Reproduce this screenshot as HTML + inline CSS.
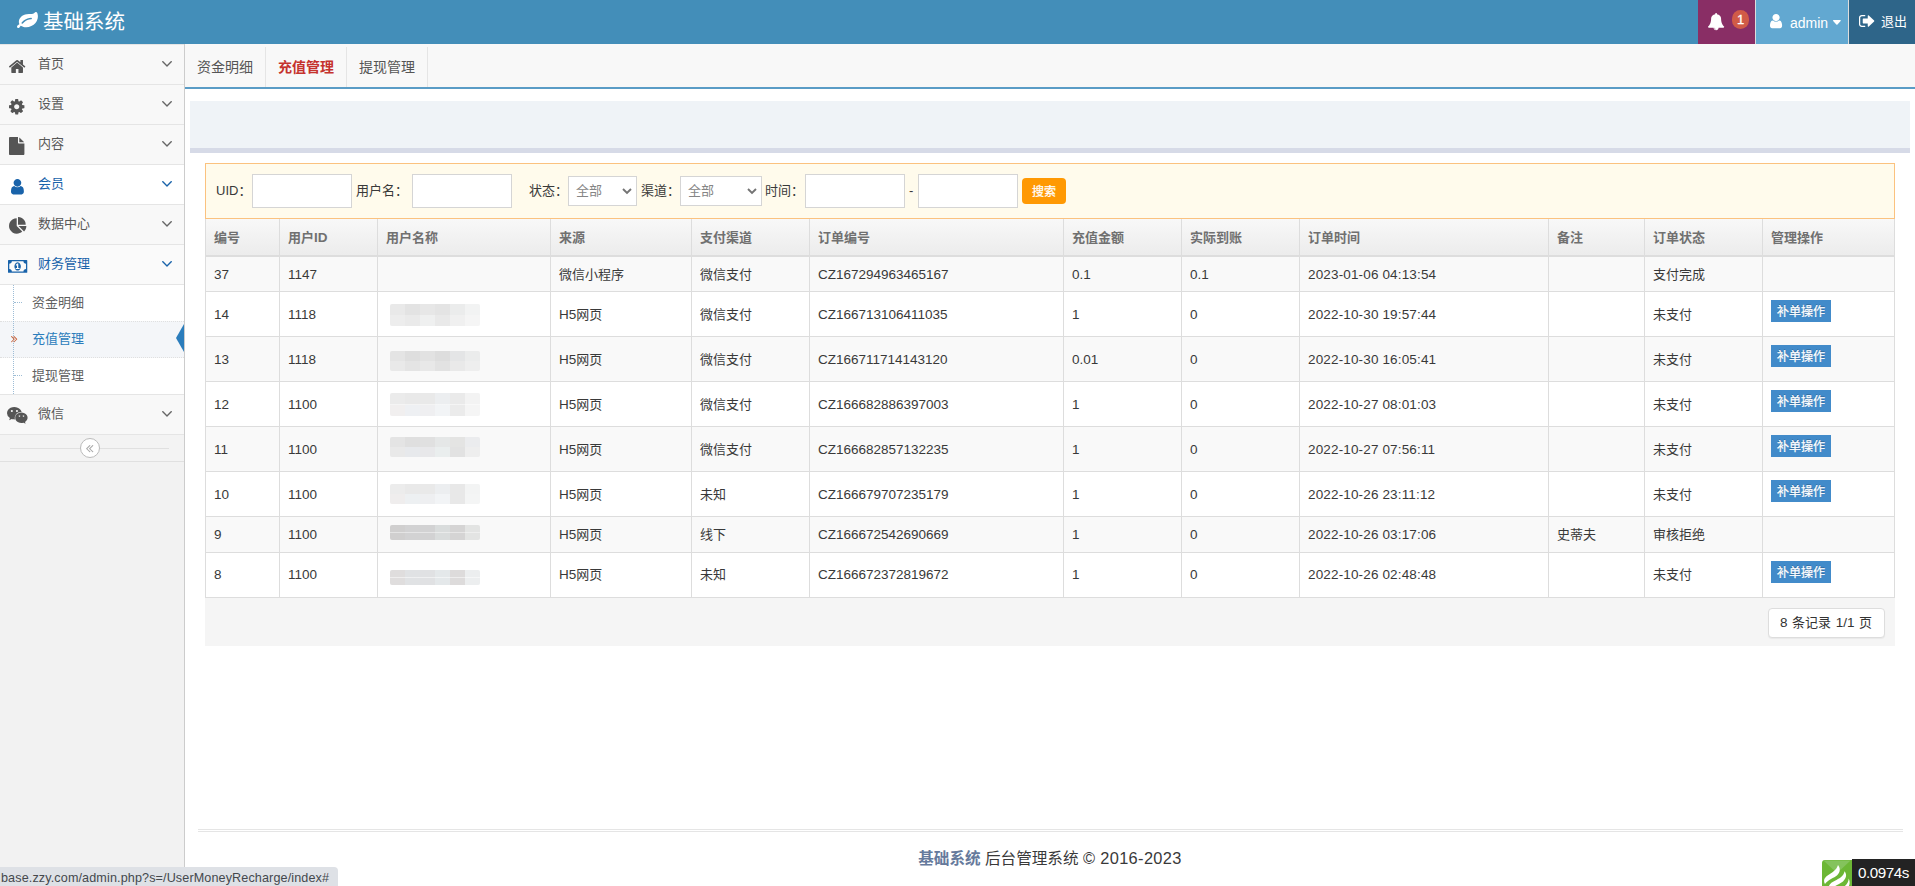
<!DOCTYPE html>
<html lang="zh-CN">
<head>
<meta charset="utf-8">
<title>基础系统</title>
<style>
*{box-sizing:border-box}
html,body{margin:0;padding:0}
body{width:1915px;height:886px;overflow:hidden;background:#fff;position:relative;
 font-family:"Liberation Sans","Noto Sans CJK SC",sans-serif;font-size:13px;color:#393939;line-height:1.5}
svg{display:block}
/* navbar */
#navbar{position:absolute;left:0;top:0;width:1915px;height:44px;background:#438eb9}
#brand{position:absolute;left:43px;top:1px;height:44px;line-height:42px;color:#fff;font-size:20.5px;white-space:nowrap}
.acenav{position:absolute;top:0;height:44px;color:#fff;font-size:13px;line-height:43px;white-space:nowrap}
#nv-bell{left:1698px;width:57px;background:#892e65}
#nv-user{left:1756px;width:92px;background:#62a8d1}
#nv-out{left:1849px;width:66px;background:#2e6589}
#navbar .sep{position:absolute;top:0;width:1px;height:44px;background:#ddd}
.badge{position:absolute;left:34px;top:10px;width:17px;height:19px;border-radius:9px;background:#d15b47;color:#fff;font-size:13px;line-height:19.5px;text-align:center;-webkit-text-stroke:.3px #fff}
svg.i{position:absolute;overflow:visible}
#icons{position:absolute;left:0;top:0;width:0;height:0}
/* sidebar */
#sidebar{position:absolute;left:0;top:44px;width:185px;height:842px;background:#f2f2f2;border-right:1px solid #ccc}
.item{position:absolute;left:0;width:184px;height:41px;background:#f8f8f8;border-bottom:1px solid #e5e5e5;border-top:1px solid #e5e5e5;color:#585858;font-size:13px;line-height:38px}
.item .txt{position:absolute;left:38px;top:0}
.item.hover{background:#fff;color:#1963aa}
.item.open{background:#fafafa;color:#1963aa}
#submenu{position:absolute;left:0;top:241px;width:184px;height:109px;background:#fff}
#vline{position:absolute;left:13px;top:0;width:0;height:109px;border-left:1px dotted #9dbdd6}
.tick{position:absolute;left:14px;width:8px;height:0;border-top:1px dotted #9dbdd6}
.sub{position:absolute;left:0;width:184px;height:37px;line-height:35px;color:#616161;font-size:13px}
.sub .txt{position:absolute;left:32px;top:0}
.sub.active{background:#f4f6f9;color:#2b7dbc;border-top:1px dotted #e0e0e0;border-bottom:1px dotted #e0e0e0;line-height:34px}
.tri{position:absolute;left:176px;top:2px;width:0;height:0;border-top:14px solid transparent;border-bottom:14px solid transparent;border-right:8px solid #2b7dbc}
#collapse{position:absolute;left:0;top:391px;width:184px;height:27px;background:#f3f3f3;border-bottom:1px solid #e0e0e0}
#collapse .ln{position:absolute;left:10px;top:13px;width:159px;height:1px;background:#e0e0e0}
#collapse .circ{position:absolute;left:80.2px;top:3px;width:19.5px;height:19.5px;border-radius:10px;border:1px solid #bbb;background:#fff}
/* tabs */
#tabs{position:absolute;left:185px;top:44px;width:1730px;height:45px;background:#f8f8f8;border-bottom:2px solid #5a9cc6}
.tab{position:absolute;top:3px;height:40px;width:81px;border-right:1px solid #e5e5e5;line-height:40px;text-align:center;font-size:14px;color:#555}
.tab.on{color:#c5332e;font-weight:bold}
/* header box */
#hdr{position:absolute;left:190px;top:101px;width:1720px;height:52px;background:#eff3f7;border-bottom:5px solid #d6dae7}
/* search */
#search{position:absolute;left:205px;top:163px;width:1690px;height:56px;background:#fffbec;border:1px solid #fbc27f;font-size:13px;color:#393939}
#search .lb{position:absolute;top:0;line-height:54px;white-space:nowrap}
#search .inp{position:absolute;top:10px;height:34px;width:100px;background:#fff;border:1px solid #d5d5d5}
#search .sel{position:absolute;top:12px;height:30px;background:#fff;border:1px solid #d5d5d5;border-radius:0;color:#858585;line-height:28px;padding-left:7px}
.chev{position:absolute;right:4px;top:11px;width:10px;height:7px}
#sbtn{position:absolute;left:816px;top:14px;width:44px;height:26px;border-radius:4px;background:#ff9903;color:#fff;font-size:12px;line-height:28.5px;text-align:center;overflow:hidden;-webkit-text-stroke:.25px #fff}
/* table */
#tbl{position:absolute;left:205px;top:219px;width:1690px;border-collapse:separate;border-spacing:0;table-layout:fixed;font-size:13px;color:#393939}
#tbl th,#tbl td{border-right:1px solid #ddd;border-bottom:1px solid #ddd;padding:0 0 0 8px;text-align:left;white-space:nowrap;overflow:hidden;vertical-align:middle;line-height:19px}
#tbl th:first-child,#tbl td:first-child{border-left:1px solid #ddd}
#tbl th{height:38px;color:#707070;font-weight:bold;background:linear-gradient(#f8f8f8,#ececec);border-bottom:2px solid #ddd}
#tbl tr.a td{background:#f9f9f9}
#tbl tr.b td{background:#fff}
#tbl tr.h35 td{height:35px}
#tbl tr.h36 td{height:36px}
#tbl tr.h45 td{height:45px}
#tbl tr.last td{padding-bottom:2px}
.n{font-size:13.5px;letter-spacing:0}
.d{font-size:13.5px;letter-spacing:.15px}
.op{display:inline-block;background:#428bca;color:#fff;font-size:12px;height:22px;line-height:24px;padding:0 6px;position:relative;top:-3px;vertical-align:middle;-webkit-text-stroke:.25px #fff;text-shadow:0 -1px 0 rgba(0,0,0,.25);overflow:hidden}
#tbl tr.last .op{top:-2px}
.bl{position:absolute;left:390px;width:90px;border-radius:2px}
#pager{position:absolute;left:205px;top:598px;width:1690px;height:48px;background:#f5f5f5}
#pager div{position:absolute;left:1562.5px;top:10px;width:117px;height:29.5px;background:#fff;border:1px solid #ddd;border-radius:4px;box-shadow:0 1px 1px rgba(0,0,0,.05);line-height:28px;text-align:center;font-size:13px;color:#333;word-spacing:1px;white-space:nowrap}
/* footer */
#foot{position:absolute;left:198px;top:829px;width:1705px;height:3px;border-top:3px double #e5e5e5}
#foottxt{position:absolute;left:185px;top:846px;width:1730px;text-align:center;font-size:15.6px;color:#393939;line-height:24px;white-space:nowrap}
#foottxt b{color:#667a9c}
#status{position:absolute;left:0;top:867px;width:338px;height:19px;background:#dee1e6;border-top-right-radius:4px;font-size:12.6px;letter-spacing:.12px;line-height:22.5px;color:#44484d;white-space:nowrap;padding-left:1px;overflow:hidden}
#trace{position:absolute;left:1852px;top:859px;width:63px;height:27px;background:#232323;color:#fff;font-size:15.2px;letter-spacing:-.45px;line-height:28px;text-align:center}
#tplogo{position:absolute;left:1822px;top:859.5px;width:30px;height:27px}
</style>
</head>
<body>
<div id="navbar">
 <div id="brand"><span>基础系统</span></div>
 <div class="acenav" id="nv-bell"><div class="badge">1</div></div>
 <div class="acenav" id="nv-user"><span style="position:absolute;left:34px;top:1.5px;font-size:14px">admin</span></div>
 <div class="sep" style="left:1755px"></div><div class="sep" style="left:1848px"></div>
 <div class="acenav" id="nv-out"><span style="position:absolute;left:32px;top:0">退出</span></div>
</div>

<div id="sidebar">
 <div class="item" style="top:0"><span class="txt">首页</span></div>
 <div class="item" style="top:40px"><span class="txt">设置</span></div>
 <div class="item" style="top:80px"><span class="txt">内容</span></div>
 <div class="item hover" style="top:120px"><span class="txt">会员</span></div>
 <div class="item" style="top:160px"><span class="txt">数据中心</span></div>
 <div class="item open" style="top:200px"><span class="txt">财务管理</span></div>
 <div id="submenu">
  <div class="tick" style="top:17px"></div>
  <div class="tick" style="top:90px"></div>
  <div class="sub" style="top:0"><span class="txt">资金明细</span></div>
  <div class="sub active" style="top:36px"><span class="txt">充值管理</span><i class="tri"></i></div>
  <div class="sub" style="top:73px"><span class="txt">提现管理</span></div>
  <div id="vline"></div>
 </div>
 <div class="item" style="top:350px"><span class="txt">微信</span></div>
 <div id="collapse"><div class="ln"></div><div class="circ"></div></div>
</div>

<div id="icons">
<svg class="i" style="left:16.9px;top:11.9px" width="20.9" height="16.1" viewBox="0 128 1792 1408" preserveAspectRatio="none"><path fill="#fff" d="M1280 704q0-26-19-45t-45-19q-172 0-318 49.500t-259.500 134-235.500 219.500q-19 21-19 45 0 26 19 45t45 19q24 0 45-19 27-24 74-71t67-66q137-124 268.500-176t313.500-52q26 0 45-19t19-45zm512-198q0 95-20 193-46 224-184.500 383t-357.500 268q-214 108-438 108-148 0-286-47-15-5-88-42t-96-37q-16 0-39.500 32t-45 70-52.500 70-60 32q-43 0-63.500-17.500t-45.500-59.500q-2-4-6-11t-5.500-10-3-9.500-1.500-13.500q0-35 31-73.500t68-65.500 68-56 31-48q0-4-14-38t-16-44q-9-51-9-104 0-115 43.500-220t119-184.500 170.500-139 204-95.500q55-18 145-25.500t179.500-9 178.500-6 163.500-24 113.500-56.500l29.500-29.500 29.500-28 27-20 36.500-16 43.500-4.500q39 0 70.500 46t47.500 112 24 124 8 96z"/></svg>
<svg class="i" style="left:1707.9px;top:12.7px" width="16.2" height="17.3" viewBox="64 0 1664 1792" preserveAspectRatio="none"><path fill="#fff" d="M912 1696q0-16-16-16-59 0-101.500-42.500t-42.500-101.500q0-16-16-16t-16 16q0 73 51.500 124.500t124.500 51.500q16 0 16-16zm816-288q0 52-38 90t-90 38h-448q0 106-75 181t-181 75-181-75-75-181h-448q-52 0-90-38t-38-90q50-42 91-88t85-119.500 74.500-158.500 50-206 19.500-260q0-152 117-282.500t307-158.500q-8-19-8-39 0-40 28-68t68-28 68 28 28 68q0 20-8 39 190 28 307 158.500t117 282.500q0 139 19.500 260t50 206 74.500 158.500 85 119.500 91 88z"/></svg>
<svg class="i" style="left:1769.9px;top:14.1px" width="12.1" height="14.3" viewBox="256 128 1280 1536" preserveAspectRatio="none"><path fill="#fff" d="M1536 1399q0 109-62.500 187t-150.500 78h-854q-88 0-150.500-78t-62.500-187q0-85 8.500-160.500t31.500-152 58.500-131 94-89 134.500-34.500q131 128 313 128t313-128q76 0 134.500 34.500t94 89 58.500 131 31.500 152 8.500 160.500zm-256-887q0 159-112.500 271.500t-271.500 112.500-271.500-112.500-112.500-271.500 112.500-271.500 271.500-112.500 271.500 112.500 112.500 271.500z"/></svg>
<svg class="i" style="left:1832.8px;top:20.2px" width="7.8" height="4.8" viewBox="384 640 1024 576" preserveAspectRatio="none"><path fill="#fff" d="M1408 704q0 26-19 45l-448 448q-19 19-45 19t-45-19l-448-448q-19-19-19-45t19-45 45-19h896q26 0 45 19t19 45z"/></svg>
<svg class="i" style="left:1859.2px;top:15.3px" width="15.3" height="12.0" viewBox="64 256 1568 1280" preserveAspectRatio="none"><path fill="#fff" d="M704 1440q0 4 1 20t.5 26.500-3 23.500-10 19.500-20.500 6.500h-320q-119 0-203.500-84.500t-84.500-203.500v-704q0-119 84.500-203.500t203.500-84.500h320q13 0 22.500 9.500t9.500 22.500q0 4 1 20t.5 26.500-3 23.500-10 19.500-20.500 6.500h-320q-66 0-113 47t-47 113v704q0 66 47 113t113 47h312l11.500 1 11.500 3 8 5.500 7 9 2 13.500zm928-544q0 26-19 45l-544 544q-19 19-45 19t-45-19-19-45v-288h-448q-26 0-45-19t-19-45v-384q0-26 19-45t45-19h448v-288q0-26 19-45t45-19 45 19l544 544q19 19 19 45z"/></svg>
<svg class="i" style="left:8.9px;top:59.9px" width="16.3" height="13.0" viewBox="25.88888931274414 253 1612.22216796875 1283" preserveAspectRatio="none"><path fill="#555" d="M1408 992v480q0 26-19 45t-45 19h-384v-384h-256v384h-384q-26 0-45-19t-19-45v-480q0-1 .5-3t.5-3l575-474 575 474q1 2 1 6zm223-69l-62 74q-8 9-21 11h-3q-13 0-21-7l-692-577-692 577q-12 8-24 7-13-2-21-11l-62-74q-8-10-7-23.500t11-21.500l719-599q32-26 76-26t76 26l244 204v-195q0-14 9-23t23-9h192q14 0 23 9t9 23v408l219 182q10 8 11 21.500t-7 23.500z"/></svg>
<svg class="i" style="left:9.49px;top:98.69px" width="15.42" height="15.42" viewBox="128 128 1536 1536" preserveAspectRatio="none"><path fill="#555" d="M1152 896q0-106-75-181t-181-75-181 75-75 181 75 181 181 75 181-75 75-181zm512-109v222q0 12-8 23t-20 13l-185 28q-19 54-39 91 35 50 107 138 10 12 10 25t-9 23q-27 37-99 108t-94 71q-12 0-26-9l-138-108q-44 23-91 38-16 136-29 186-7 28-36 28h-222q-14 0-24.500-8.500t-11.500-21.500l-28-184q-49-16-90-37l-141 107q-10 9-25 9-14 0-25-11-126-114-165-168-7-10-7-23 0-12 8-23 15-21 51-66.500t54-70.500q-27-50-41-99l-183-27q-13-2-21-12.500t-8-23.500v-222q0-12 8-23t19-13l186-28q14-46 39-92-40-57-107-138-10-12-10-24 0-10 9-23 26-36 98.500-107.500t94.500-71.500q13 0 26 10l138 107q44-23 91-38 16-136 29-186 7-28 36-28h222q14 0 24.500 8.500t11.500 21.500l28 184q49 16 90 37l142-107q9-9 24-9 13 0 25 10 129 119 165 170 7 8 7 22 0 12-8 23-15 21-51 66.500t-54 70.500q26 50 41 98l183 28q13 2 21 12.500t8 23.500z"/></svg>
<svg class="i" style="left:9.49px;top:137.4px" width="15.42" height="18.0" viewBox="128 0 1536 1792" preserveAspectRatio="none"><path fill="#555" d="M1152 512v-472q22 14 36 28l408 408q14 14 28 36h-472zm-128 32q0 40 28 68t68 28h544v1056q0 40-28 68t-68 28h-1344q-40 0-68-28t-28-68v-1600q0-40 28-68t68-28h800v544z"/></svg>
<svg class="i" style="left:10.77px;top:178.69px" width="12.86" height="15.42" viewBox="256 128 1280 1536" preserveAspectRatio="none"><path fill="#1963aa" d="M1536 1399q0 109-62.500 187t-150.500 78h-854q-88 0-150.500-78t-62.500-187q0-85 8.500-160.500t31.500-152 58.500-131 94-89 134.500-34.500q131 128 313 128t313-128q76 0 134.500 34.500t94 89 58.500 131 31.500 152 8.500 160.500zm-256-887q0 159-112.500 271.500t-271.500 112.500-271.500-112.500-112.500-271.500 112.500-271.500 271.500-112.500 271.500 112.500 112.500 271.500z"/></svg>
<svg class="i" style="left:8.52px;top:217.4px" width="17.36" height="16.71" viewBox="0 0 1728 1664" preserveAspectRatio="none"><path fill="#555" d="M768 890l546 546q-106 108-247.500 168t-298.500 60q-209 0-385.500-103t-279.500-279.500-103-385.500 103-385.500 279.500-279.500 385.500-103v762zm187 6h773q0 157-60 298.500t-168 247.500zm709-128h-768v-768q209 0 385.500 103t279.500 279.500 103 385.500z"/></svg>
<svg class="i" style="left:7.56px;top:259.97px" width="19.28" height="12.86" viewBox="-64 256 1920 1280" preserveAspectRatio="none"><path fill="#1963aa" d="M704 1152h384v-96h-128v-448h-114l-148 137 77 80q42-37 55-57h2v288h-128v96zm512-256q0 70-21 142t-59.500 134-101.500 101-138 39-138-39-101.500-101-59.500-134-21-142 21-142 59.500-134 101.500-101 138-39 138 39 101.500 101 59.500 134 21 142zm512 256v-512q-106 0-181-75t-75-181h-1152q0 106-75 181t-181 75v512q106 0 181 75t75 181h1152q0-106 75-181t181-75zm128-832v1152q0 26-19 45t-45 19h-1792q-26 0-45-19t-19-45v-1152q0-26 19-45t45-19h1792q26 0 45 19t19 45z"/></svg>
<svg class="i" style="left:6.91px;top:406.92px" width="20.58" height="16.76" viewBox="0 62 2048 1668" preserveAspectRatio="none"><path fill="#555" d="M580 461q0-41-25-66t-66-25q-43 0-76 25.500t-33 65.500q0 39 33 64.500t76 25.500q41 0 66-24.500t25-65.500zm743 507q0-28-25.500-50t-65.500-22q-27 0-49.500 22.500t-22.500 49.500q0 28 22.500 50.500t49.500 22.500q40 0 65.500-22t25.500-51zm-236-507q0-41-24.500-66t-65.500-25q-43 0-76 25.500t-33 65.500q0 39 33 64.500t76 25.500q41 0 65.500-24.500t24.500-65.500zm635 507q0-28-26-50t-65-22q-27 0-49.500 22.500t-22.500 49.500q0 28 22.500 50.500t49.500 22.500q39 0 65-22t26-51zm-266-397q-31-4-70-4-169 0-311 77t-223.500 208.500-81.500 287.500q0 78 23 152-35 3-68 3-26 0-50-1.500t-55-6.500-44.500-7-54.500-10.500-50-10.500l-253 127 72-218q-290-203-290-490 0-169 97.500-311t264-223.500 363.500-81.500q176 0 332.500 66t262 182.500 136.500 260.500zm592 561q0 117-68.500 223.500t-185.500 193.500l55 181-199-109q-150 37-218 37-169 0-311-70.500t-223.500-191.500-81.500-264 81.500-264 223.500-191.500 311-70.500q161 0 303 70.500t227.500 192 85.500 263.500z"/></svg>
<svg class="i" style="left:161.99px;top:61.16px" width="10.02" height="5.85" viewBox="397 653 998 582" preserveAspectRatio="none"><path fill="#666" d="M1395 736q0 13-10 23l-466 466q-10 10-23 10t-23-10l-466-466q-10-10-10-23t10-23l50-50q10-10 23-10t23 10l393 393 393-393q10-10 23-10t23 10l50 50q10 10 10 23z"/></svg>
<svg class="i" style="left:161.99px;top:101.16px" width="10.02" height="5.85" viewBox="397 653 998 582" preserveAspectRatio="none"><path fill="#666" d="M1395 736q0 13-10 23l-466 466q-10 10-23 10t-23-10l-466-466q-10-10-10-23t10-23l50-50q10-10 23-10t23 10l393 393 393-393q10-10 23-10t23 10l50 50q10 10 10 23z"/></svg>
<svg class="i" style="left:161.99px;top:141.16px" width="10.02" height="5.85" viewBox="397 653 998 582" preserveAspectRatio="none"><path fill="#666" d="M1395 736q0 13-10 23l-466 466q-10 10-23 10t-23-10l-466-466q-10-10-10-23t10-23l50-50q10-10 23-10t23 10l393 393 393-393q10-10 23-10t23 10l50 50q10 10 10 23z"/></svg>
<svg class="i" style="left:161.99px;top:181.16px" width="10.02" height="5.85" viewBox="397 653 998 582" preserveAspectRatio="none"><path fill="#1963aa" d="M1395 736q0 13-10 23l-466 466q-10 10-23 10t-23-10l-466-466q-10-10-10-23t10-23l50-50q10-10 23-10t23 10l393 393 393-393q10-10 23-10t23 10l50 50q10 10 10 23z"/></svg>
<svg class="i" style="left:161.99px;top:221.16px" width="10.02" height="5.85" viewBox="397 653 998 582" preserveAspectRatio="none"><path fill="#666" d="M1395 736q0 13-10 23l-466 466q-10 10-23 10t-23-10l-466-466q-10-10-10-23t10-23l50-50q10-10 23-10t23 10l393 393 393-393q10-10 23-10t23 10l50 50q10 10 10 23z"/></svg>
<svg class="i" style="left:161.99px;top:261.16px" width="10.02" height="5.85" viewBox="397 653 998 582" preserveAspectRatio="none"><path fill="#1963aa" d="M1395 736q0 13-10 23l-466 466q-10 10-23 10t-23-10l-466-466q-10-10-10-23t10-23l50-50q10-10 23-10t23 10l393 393 393-393q10-10 23-10t23 10l50 50q10 10 10 23z"/></svg>
<svg class="i" style="left:161.99px;top:411.16px" width="10.02" height="5.85" viewBox="397 653 998 582" preserveAspectRatio="none"><path fill="#666" d="M1395 736q0 13-10 23l-466 466q-10 10-23 10t-23-10l-466-466q-10-10-10-23t10-23l50-50q10-10 23-10t23 10l393 393 393-393q10-10 23-10t23 10l50 50q10 10 10 23z"/></svg>
<svg class="i" style="left:10.5px;top:336.0px" width="6.3" height="6.3" viewBox="397 461 966 998" preserveAspectRatio="none"><path fill="#c86139" d="M979 960q0 13-10 23l-466 466q-10 10-23 10t-23-10l-50-50q-10-10-10-23t10-23l393-393-393-393q-10-10-10-23t10-23l50-50q10-10 23-10t23 10l466 466q10 10 10 23zm384 0q0 13-10 23l-466 466q-10 10-23 10t-23-10l-50-50q-10-10-10-23t10-23l393-393-393-393q-10-10-10-23t10-23l50-50q10-10 23-10t23 10l466 466q10 10 10 23z"/></svg>
<svg class="i" style="left:86.1px;top:444.7px" width="7.4" height="7.3" viewBox="429 461 966 998" preserveAspectRatio="none"><path fill="#aaa" d="M1011 1376q0 13-10 23l-50 50q-10 10-23 10t-23-10l-466-466q-10-10-10-23t10-23l466-466q10-10 23-10t23 10l50 50q10 10 10 23t-10 23l-393 393 393 393q10 10 10 23zm384 0q0 13-10 23l-50 50q-10 10-23 10t-23-10l-466-466q-10-10-10-23t10-23l466-466q10-10 23-10t23 10l50 50q10 10 10 23t-10 23l-393 393 393 393q10 10 10 23z"/></svg>
</div>

<div id="tabs">
 <div class="tab" style="left:0">资金明细</div>
 <div class="tab on" style="left:81px">充值管理</div>
 <div class="tab" style="left:162px">提现管理</div>
</div>
<div id="hdr"></div>

<div id="search">
 <span class="lb" style="left:10px">UID：</span>
 <div class="inp" style="left:46px"></div>
 <span class="lb" style="left:150px">用户名：</span>
 <div class="inp" style="left:206px"></div>
 <span class="lb" style="left:323px">状态：</span>
 <div class="sel" style="left:362px;width:69px">全部<svg class="chev" viewBox="0 0 10 7"><path d="M1 1l4 4 4-4" fill="none" stroke="#747474" stroke-width="1.900"/></svg></div>
 <span class="lb" style="left:435px">渠道：</span>
 <div class="sel" style="left:474px;width:82px">全部<svg class="chev" viewBox="0 0 10 7"><path d="M1 1l4 4 4-4" fill="none" stroke="#747474" stroke-width="1.900"/></svg></div>
 <span class="lb" style="left:559px">时间：</span>
 <div class="inp" style="left:599px"></div>
 <span class="lb" style="left:703px">-</span>
 <div class="inp" style="left:712px"></div>
 <div id="sbtn">搜索</div>
</div>

<table id="tbl">
 <colgroup><col style="width:75px"><col style="width:98px"><col style="width:173px"><col style="width:141px"><col style="width:118px"><col style="width:254px"><col style="width:118px"><col style="width:118px"><col style="width:249px"><col style="width:96px"><col style="width:118px"><col style="width:132px"></colgroup>
 <tr><th>编号</th><th>用户<span class="n">ID</span></th><th>用户名称</th><th>来源</th><th>支付渠道</th><th>订单编号</th><th>充值金额</th><th>实际到账</th><th>订单时间</th><th>备注</th><th>订单状态</th><th>管理操作</th></tr>
 <tr class="a h35"><td class="n">37</td><td class="n">1147</td><td></td><td>微信小程序</td><td>微信支付</td><td class="n">CZ167294963465167</td><td class="n">0.1</td><td class="n">0.1</td><td class="d">2023-01-06 04:13:54</td><td></td><td>支付完成</td><td></td></tr>
 <tr class="b h45"><td class="n">14</td><td class="n">1118</td><td></td><td><span class="n">H5</span>网页</td><td>微信支付</td><td class="n">CZ166713106411035</td><td class="n">1</td><td class="n">0</td><td class="d">2022-10-30 19:57:44</td><td></td><td>未支付</td><td><span class="op">补单操作</span></td></tr>
 <tr class="a h45"><td class="n">13</td><td class="n">1118</td><td></td><td><span class="n">H5</span>网页</td><td>微信支付</td><td class="n">CZ166711714143120</td><td class="n">0.01</td><td class="n">0</td><td class="d">2022-10-30 16:05:41</td><td></td><td>未支付</td><td><span class="op">补单操作</span></td></tr>
 <tr class="b h45"><td class="n">12</td><td class="n">1100</td><td></td><td><span class="n">H5</span>网页</td><td>微信支付</td><td class="n">CZ166682886397003</td><td class="n">1</td><td class="n">0</td><td class="d">2022-10-27 08:01:03</td><td></td><td>未支付</td><td><span class="op">补单操作</span></td></tr>
 <tr class="a h45"><td class="n">11</td><td class="n">1100</td><td></td><td><span class="n">H5</span>网页</td><td>微信支付</td><td class="n">CZ166682857132235</td><td class="n">1</td><td class="n">0</td><td class="d">2022-10-27 07:56:11</td><td></td><td>未支付</td><td><span class="op">补单操作</span></td></tr>
 <tr class="b h45"><td class="n">10</td><td class="n">1100</td><td></td><td><span class="n">H5</span>网页</td><td>未知</td><td class="n">CZ166679707235179</td><td class="n">1</td><td class="n">0</td><td class="d">2022-10-26 23:11:12</td><td></td><td>未支付</td><td><span class="op">补单操作</span></td></tr>
 <tr class="a h36"><td class="n">9</td><td class="n">1100</td><td></td><td><span class="n">H5</span>网页</td><td>线下</td><td class="n">CZ166672542690669</td><td class="n">1</td><td class="n">0</td><td class="d">2022-10-26 03:17:06</td><td>史蒂夫</td><td>审核拒绝</td><td></td></tr>
 <tr class="b h45 last"><td class="n">8</td><td class="n">1100</td><td></td><td><span class="n">H5</span>网页</td><td>未知</td><td class="n">CZ166672372819672</td><td class="n">1</td><td class="n">0</td><td class="d">2022-10-26 02:48:48</td><td></td><td>未支付</td><td><span class="op">补单操作</span></td></tr>
</table>
<div id="blurs">
 <div class="bl" style="top:304px;height:22px;background:linear-gradient(90deg,#e9e9e9 0px 15px,#e3e3e3 15px 30px,#e7e7e7 30px 45px,#e4e4e4 45px 60px,#ebecec 60px 75px,#f2f3f3 75px 90px) 0 0/90px 11.0px no-repeat,linear-gradient(90deg,#ededed 0px 15px,#eaeaea 15px 30px,#eff0f0 30px 45px,#e9e9e9 45px 60px,#f0f0f0 60px 75px,#f5f5f5 75px 90px) 0 11.0px/90px 11.0px no-repeat"></div>
 <div class="bl" style="top:351px;height:20px;background:linear-gradient(90deg,#e4e4e4 0px 15px,#dedede 15px 30px,#e2e2e2 30px 45px,#dddddd 45px 60px,#e4e5e6 60px 75px,#ebecec 75px 90px) 0 0/90px 10.0px no-repeat,linear-gradient(90deg,#e9e9e9 0px 15px,#e4e4e4 15px 30px,#e8e8e8 30px 45px,#e2e2e2 45px 60px,#e9e9e9 60px 75px,#eeeeee 75px 90px) 0 10.0px/90px 10.0px no-repeat"></div>
 <div class="bl" style="top:393px;height:23px;background:linear-gradient(90deg,#ebebeb 0px 15px,#e9e9e9 15px 30px,#e9e9e9 30px 45px,#eceef0 45px 60px,#eaeaea 60px 75px,#f3f3f3 75px 90px) 0 0/90px 11.5px no-repeat,linear-gradient(90deg,#f1efef 0px 15px,#eef0f3 15px 30px,#efeff1 30px 45px,#f2f4f6 45px 60px,#ebebeb 60px 75px,#f5f5f5 75px 90px) 0 11.5px/90px 11.5px no-repeat"></div>
 <div class="bl" style="top:437px;height:20px;background:linear-gradient(90deg,#e4e4e4 0px 15px,#dfdfdf 15px 30px,#e0e0e0 30px 45px,#e5e7e7 45px 60px,#e4e4e3 60px 75px,#ebecee 75px 90px) 0 0/90px 10.0px no-repeat,linear-gradient(90deg,#e9e9e9 0px 15px,#e7e9ec 15px 30px,#e8e8ea 30px 45px,#eaeeee 45px 60px,#e2e2e2 60px 75px,#eeeeee 75px 90px) 0 10.0px/90px 10.0px no-repeat"></div>
 <div class="bl" style="top:484px;height:20px;background:linear-gradient(90deg,#ececec 0px 15px,#e9e9e9 15px 30px,#e9e9e9 30px 45px,#eceef0 45px 60px,#e8e8e8 60px 75px,#f3f4f4 75px 90px) 0 0/90px 10.0px no-repeat,linear-gradient(90deg,#efeded 0px 15px,#edf0f2 15px 30px,#eeeff1 30px 45px,#f2f4f6 45px 60px,#e8e8e8 60px 75px,#f4f5f5 75px 90px) 0 10.0px/90px 10.0px no-repeat"></div>
 <div class="bl" style="top:525px;height:15px;background:linear-gradient(90deg,#d0cfcf 0px 15px,#d2d2d3 15px 30px,#d2d2d3 30px 45px,#d9dcdc 45px 60px,#d5d4d4 60px 75px,#e3e4e3 75px 90px) 0 0/90px 7.5px no-repeat,linear-gradient(90deg,#d0cfcf 0px 15px,#d2d2d3 15px 30px,#d2d2d3 30px 45px,#d9dcdc 45px 60px,#d5d4d4 60px 75px,#e3e4e3 75px 90px) 0 7.5px/90px 7.5px no-repeat"></div>
 <div class="bl" style="top:570px;height:15px;background:linear-gradient(90deg,#dfdddd 0px 15px,#e0e2e4 15px 30px,#e0e1e3 30px 45px,#e4e8ea 45px 60px,#dddbdb 60px 75px,#eceeef 75px 90px) 0 0/90px 7.5px no-repeat,linear-gradient(90deg,#dfdddd 0px 15px,#e0e2e4 15px 30px,#e0e1e3 30px 45px,#e4e8ea 45px 60px,#dddbdb 60px 75px,#eceeef 75px 90px) 0 7.5px/90px 7.5px no-repeat"></div>
</div>
<div id="pager"><div><span class="n">8</span> 条记录 <span class="n">1/1</span> 页</div></div>

<div id="foot"></div>
<div id="foottxt"><b>基础系统</b> 后台管理系统 <span style="font-size:16.4px;letter-spacing:.35px">©&nbsp;2016-2023</span></div>
<div id="status">base.zzy.com/admin.php?s=/UserMoneyRecharge/index#</div>
<svg id="tplogo" viewBox="0 0 30 27"><path fill="#6cb735" d="M3 0H30V27H0V3Q0 0 3 0Z"/><path fill="#84c35c" d="M1.500 .6L11 9.500Q15 11.500 19 9.500L28.500 .6Z"/><path fill="#fff" d="M16 4.900C18.500 8 18.500 12 15.200 15.200 12 18 6 19.500 3 24 1.500 21 1.500 18 6 15.200 10 12.500 14.500 10 16 4.900Z"/><path fill="#fff" d="M22.600 11.200C24.800 14 24.800 18 21 21.500 18 24 14 25 12 27H6.500C7.500 24 10 22 13 20.800 17 18.500 21.500 16.500 22.600 11.200Z"/><path fill="#fff" d="M26.700 18.500C28 21 28 24 26.500 27H21.500C24.500 25 26.500 22.500 26.700 18.500Z"/></svg>
<div id="trace">0.0974s</div>
</body>
</html>
